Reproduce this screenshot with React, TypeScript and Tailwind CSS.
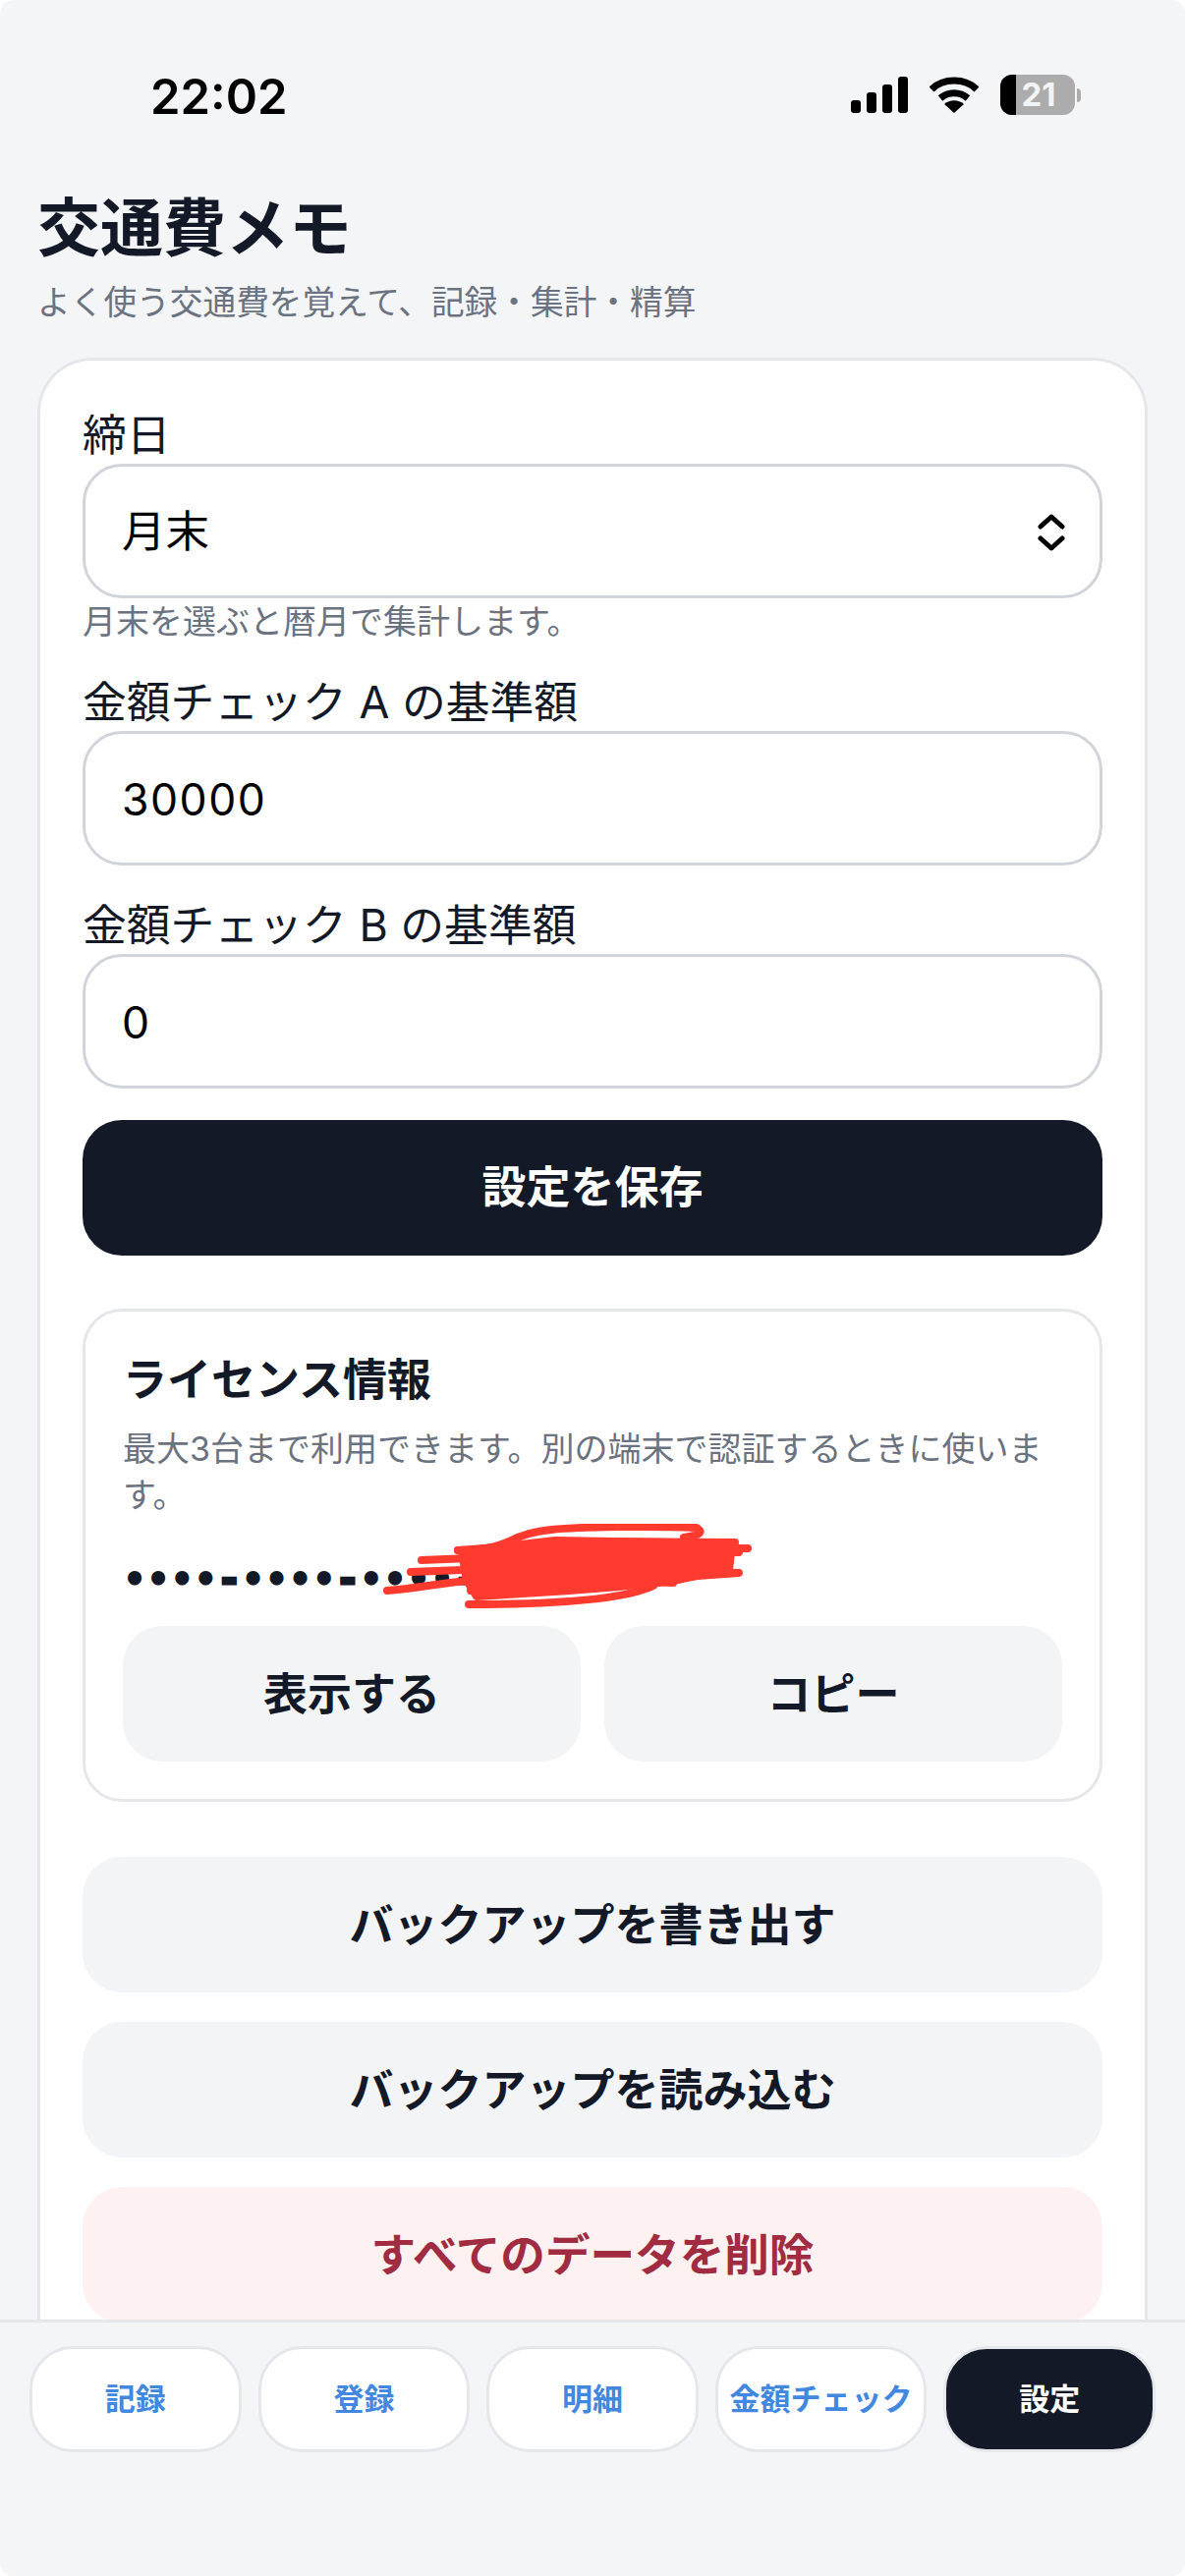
import React from 'react';

const fontStack = "font-['Inter','Noto_Sans_CJK_JP',sans-serif]";

const StatusBar: React.FC = () => (
  <div className="flex h-[196px] shrink-0 items-start justify-between pl-[115px] pr-[68px] pt-[70px]">
    <span className="text-[49px] font-semibold leading-[58px] text-black">22:02</span>
    <div className="mt-[6px] flex items-center gap-[22px]">
      <svg width="58" height="37" viewBox="0 0 58 37" fill="#000">
        <rect x="0" y="24" width="10" height="13" rx="3" />
        <rect x="16" y="16" width="10" height="21" rx="3" />
        <rect x="32" y="8" width="10" height="29" rx="3" />
        <rect x="48" y="0" width="10" height="37" rx="3" />
      </svg>
      <svg width="50" height="37" viewBox="0 0 50 37" fill="none">
        <path d="M2 13C14 1 36 1 48 13" stroke="#000" strokeWidth="7" />
        <path d="M11 22C19 15 31 15 39 22" stroke="#000" strokeWidth="7" />
        <path d="M25 37L15 28C21 23 29 23 35 28Z" fill="#000" />
      </svg>
      <div className="flex items-center">
        <div className="relative flex h-[41px] w-[76px] items-center justify-center overflow-hidden rounded-[12px] bg-[#acacac]">
          <div className="absolute inset-y-0 left-0 w-[16px] bg-black" />
          <span className="relative pl-[2px] text-[33px] font-bold leading-none text-[#f3f4f6]">21</span>
        </div>
        <div className="ml-[2px] h-[14px] w-[4px] rounded-r-full bg-[#acacac]" />
      </div>
    </div>
  </div>
);

// red pen scribble over the licence key
const Scribble: React.FC = () => (
  <svg className="absolute left-[265px] top-[-26px]" width="375" height="92" viewBox="0 0 375 92" fill="none" stroke="#ff3b30" strokeWidth="8" strokeLinecap="round" strokeLinejoin="round">
    <path d="M76 27C100 27 115 24 128 18C145 9 160 7 171 6C200 3 270 2 319 4C325 8 325 11 306 14" />
    <path d="M76 27L200 18L358 19M371 25L200 25M362 29L120 30" />
    <path d="M39 37L160 32L353 38L180 42" />
    <path d="M28 49L160 44L362 50L250 58" />
    <path d="M4 68C40 66 60 58 130 54L295 60" />
    <path d="M89 68C150 60 210 60 280 60" />
    <path d="M87 82C150 82 240 80 275 63" />
    <path d="M80 28L175 17L355 20L352 46L295 58L240 64L190 68L95 74L85 58Z" fill="#ff3b30" />
  </svg>
);

const Field: React.FC<{ label: string; value: string }> = ({ label, value }) => (
  <div>
    <div className="text-[44.8px] leading-[58px] text-[#131927]">{label}</div>
    <div className="flex h-[137px] items-center rounded-[40px] border-[3px] border-[#d1d5db] bg-white px-[37px] pt-[4px] text-[44.5px] tracking-[1.5px] text-black">
      {value}
    </div>
  </div>
);

const GrayButton: React.FC<{ label: string; className?: string }> = ({ label, className }) => (
  <button className={`flex h-[138px] items-center justify-center rounded-[40px] bg-[#f3f4f6] pt-[2px] text-[45px] font-semibold text-[#131927] ${className ?? ''}`}>
    {label}
  </button>
);

const NavButton: React.FC<{ label: string; active?: boolean }> = ({ label, active }) => (
  <button
    className={
      active
        ? 'flex h-[108px] flex-1 items-center justify-center rounded-[44px] border-[3px] border-[#e5e7eb] bg-[#131927] text-[31px] font-semibold text-white'
        : 'flex h-[108px] flex-1 items-center justify-center rounded-[44px] border-[3px] border-[#e5e7eb] bg-white text-[31px] font-semibold text-[#4287e0]'
    }
  >
    {label}
  </button>
);

const Dash: React.FC = () => <span className="[-webkit-text-stroke:3px_#131927]">-</span>;

export default function App() {
  return (
    <div className={`flex h-[2622px] w-[1206px] flex-col overflow-hidden rounded-[14px] bg-[#f4f5f7] ${fontStack}`}>
      <div className="flex min-h-0 flex-1 flex-col overflow-hidden px-[38px]">
        <StatusBar />
        <h1 className="mt-[-2px] text-[64px] font-bold leading-[76px] text-[#131927]">交通費メモ</h1>
        <p className="mt-[14px] text-[33.7px] leading-[48px] text-[#6b7280]">よく使う交通費を覚えて、記録・集計・精算</p>
        <div className="mt-[32px] flex flex-col rounded-t-[56px] border-[3px] border-b-0 border-[#e5e7eb] bg-white px-[43px] pt-[47px]">
          <div>
            <div className="text-[44.8px] leading-[58px] text-[#131927]">締日</div>
            <div className="flex h-[137px] items-center justify-between rounded-[40px] border-[3px] border-[#d1d5db] bg-white pl-[37px] pr-[35px] pt-[2px] text-[44.5px] text-black">
              月末
              <svg width="28" height="40" viewBox="0 0 28 40" fill="none" stroke="#000" strokeWidth="5" strokeLinecap="round" strokeLinejoin="round">
                <path d="M3 14L14 4L25 14" />
                <path d="M3 26L14 36L25 26" />
              </svg>
            </div>
          </div>
          <p className="mt-[4px] text-[34px] leading-[40px] text-[#6b7280]">月末を選ぶと暦月で集計します。</p>
          <div className="mt-[33px]">
            <Field label="金額チェック A の基準額" value="30000" />
          </div>
          <div className="mt-[32px]">
            <Field label="金額チェック B の基準額" value="0" />
          </div>
          <button className="mt-[32px] flex h-[138px] shrink-0 items-center justify-center rounded-[40px] bg-[#131927] text-[45px] font-semibold text-white">
            設定を保存
          </button>
          <div className="mt-[54px] rounded-[40px] border-[3px] border-[#e5e7eb] px-[38px] pb-[38px] pt-[40px]">
            <h2 className="text-[45px] font-semibold leading-[60px] text-[#131927]">ライセンス情報</h2>
            <p className="mt-[16px] text-[34px] leading-[47px] text-[#6b7280]">最大3台まで利用できます。別の端末で認証するときに使います。</p>
            <div className="relative mt-[32px] font-['DejaVu_Sans_Mono',monospace] text-[40px] font-bold leading-[60px] text-[#131927]">
              ••••<Dash />••••<Dash />••••<Dash />••••
              <Scribble />
            </div>
            <div className="mt-[18px] grid grid-cols-2 gap-[24px]">
              <GrayButton label="表示する" />
              <GrayButton label="コピー" />
            </div>
          </div>
          <GrayButton label="バックアップを書き出す" className="mt-[56px] shrink-0" />
          <GrayButton label="バックアップを読み込む" className="mt-[30px] shrink-0" />
          <button className="mt-[30px] flex h-[138px] shrink-0 items-center justify-center rounded-[40px] bg-[#fef1f2] pt-[2px] text-[45.6px] font-semibold text-[#a12b40]">
            すべてのデータを削除
          </button>
        </div>
      </div>
      <nav className="flex h-[261px] shrink-0 items-start gap-[17px] border-t-[3px] border-[#e5e7eb] bg-[#f4f5f7] px-[30px] pt-[24px]">
        <NavButton label="記録" />
        <NavButton label="登録" />
        <NavButton label="明細" />
        <NavButton label="金額チェック" />
        <NavButton label="設定" active />
      </nav>
    </div>
  );
}
